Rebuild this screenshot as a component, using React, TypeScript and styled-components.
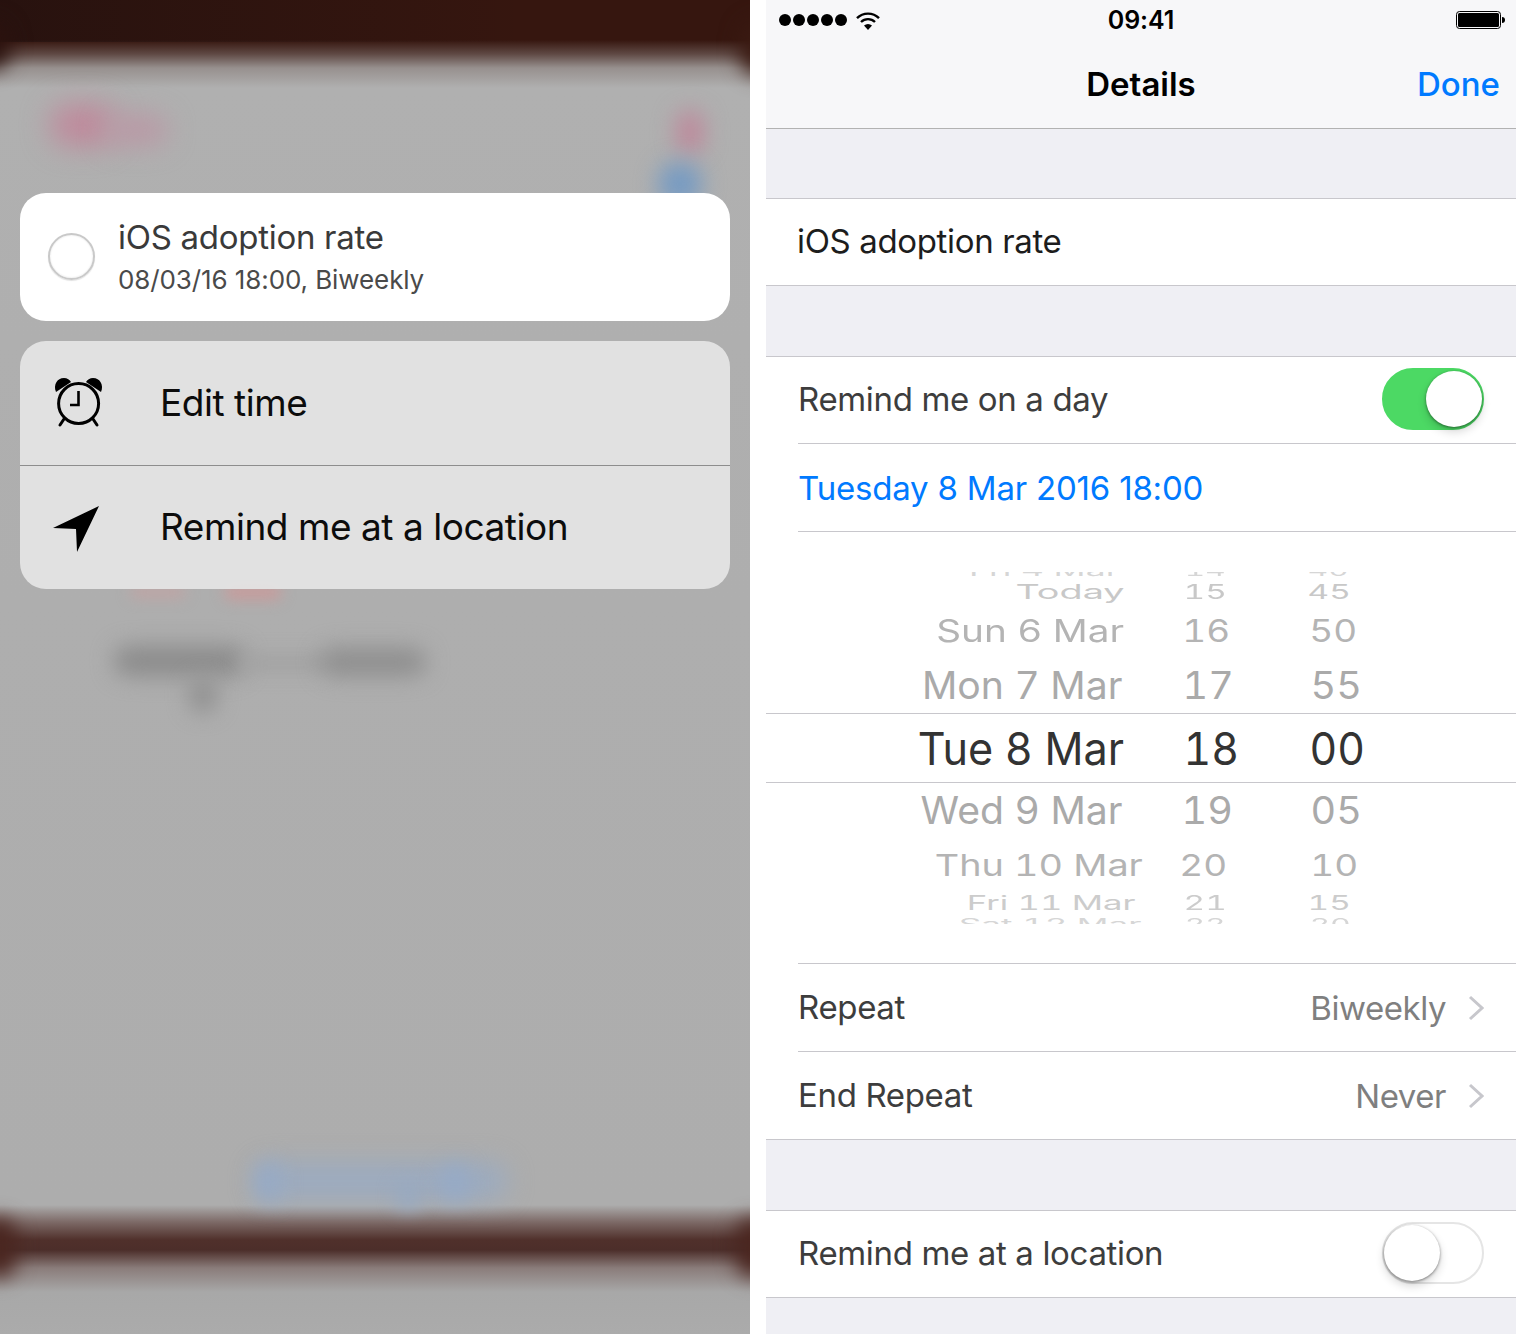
import React from "react";
import styled, { createGlobalStyle } from "styled-components";

const GlobalStyle = createGlobalStyle`
  html, body {
    margin: 0;
    background: #fff;
    font-family: Inter, "Liberation Sans", sans-serif;
  }
`;

const Page = styled.div`
  display: flex;
  justify-content: space-between;
  width: 1516px;
  height: 1334px;
  overflow: hidden;
`;

/* left: 3D touch menu over a blurred list */
const Backdrop = styled.div`
  position: relative;
  width: 750px;
  height: 1334px;
  overflow: hidden;
  padding: 193px 20px 0;
  box-sizing: border-box;
  background:
    linear-gradient(90deg, rgba(18, 12, 14, 0.4) 0, rgba(18, 12, 14, 0) 70%) 0 0 / 100% 42px no-repeat,
    linear-gradient(
      180deg,
      #36160f 0,
      #36160f 40px,
      #5f4944 54px,
      #97908e 68px,
      #b0b0b0 88px,
      #aeaeae 600px,
      #adadad 1205px,
      #7d6a67 1222px,
      #50302b 1240px,
      #4c2e2a 1250px,
      #8a7c7a 1268px,
      #a8a8a8 1292px,
      #ababab 1334px
    );
`;

const Blob = styled.div<{ $x: number; $y: number; $w: number; $h: number; $c: string; $b: number }>`
  position: absolute;
  left: ${(p) => p.$x}px;
  top: ${(p) => p.$y}px;
  width: ${(p) => p.$w}px;
  height: ${(p) => p.$h}px;
  background: ${(p) => p.$c};
  border-radius: 20px;
  filter: blur(${(p) => p.$b}px);
`;

const TaskCard = styled.div`
  position: relative;
  display: flex;
  align-items: center;
  height: 128px;
  padding-left: 28px;
  border-radius: 26px;
  background: #fff;
`;

const RadioCircle = styled.div`
  flex: none;
  width: 43px;
  height: 43px;
  margin-top: -2px;
  border: 2px solid #c9c9c9;
  border-radius: 50%;
  box-shadow: inset 0 0 2px rgba(0, 0, 0, 0.12), 0 1px 1px rgba(0, 0, 0, 0.12);
`;

const TaskText = styled.div`
  margin-left: 23px;
  padding-bottom: 4px;
`;

const TaskTitle = styled.div`
  font-size: 33px;
  line-height: 44px;
  color: #3a3a3a;
  letter-spacing: -0.28px;
`;

const TaskMeta = styled.div`
  font-size: 26px;
  line-height: 32px;
  margin-top: 5px;
  color: #4a4a4a;
  letter-spacing: -0.1px;
`;

const MenuCard = styled.div`
  position: relative;
  margin-top: 20px;
  height: 248px;
  border-radius: 26px;
  background: rgba(228, 228, 228, 0.95);
  overflow: hidden;
`;

const MenuRow = styled.div`
  display: flex;
  align-items: center;
  height: 124px;
  box-sizing: border-box;
  & + & {
    border-top: 1px solid #8d8d8d;
  }
`;

const MenuIcon = styled.div`
  flex: none;
  display: flex;
  width: 141px;
  padding-left: 34px;
  box-sizing: border-box;
`;

const IconSvg = styled.svg`
  width: 50px;
  height: 50px;
  overflow: visible;
`;

const MenuLabel = styled.div`
  margin-left: -1px;
  padding-bottom: 2px;
  font-size: 37px;
  color: #0c0c0c;
  letter-spacing: -0.45px;
`;

/* right: details screen */
const Screen = styled.div`
  width: 750px;
  height: 1334px;
  background: #efeff4;
  overflow: hidden;
`;

const NavBar = styled.div`
  position: relative;
  height: 128px;
  background: #f7f7f9;
  border-bottom: 1px solid #b2b2b2;
`;

const StatusBar = styled.div`
  display: grid;
  grid-template-columns: 1fr auto 1fr;
  align-items: center;
  height: 40px;
  padding: 0 12px;
`;

const SignalGroup = styled.div`
  display: flex;
  align-items: center;
  gap: 2px;
  margin-left: 1px;
`;

const SignalDot = styled.span`
  width: 12px;
  height: 12px;
  border-radius: 50%;
  background: #000;
`;

const WifiIcon = styled.svg`
  width: 24px;
  height: 19px;
  margin-left: 7px;
`;

const Clock = styled.div`
  font-size: 25px;
  font-weight: 600;
  letter-spacing: -0.1px;
  color: #000;
`;

const Battery = styled.svg`
  justify-self: end;
  width: 49px;
  height: 18px;
  margin-right: -1px;
`;

const NavTitleBar = styled.div`
  display: grid;
  grid-template-columns: 1fr auto 1fr;
  align-items: center;
  height: 88px;
  padding: 0 16px;
`;

const NavTitle = styled.div`
  grid-column: 2;
  font-size: 33px;
  font-weight: 600;
  color: #000;
`;

const DoneButton = styled.div`
  grid-column: 3;
  justify-self: end;
  font-size: 33px;
  font-weight: 500;
  color: #007aff;
`;

const Group = styled.div<{ $gap: number }>`
  margin-top: ${(p) => p.$gap}px;
  background: #fff;
  border-top: 1px solid #c8c7cc;
  border-bottom: 1px solid #c8c7cc;
`;

const Row = styled.div`
  display: flex;
  align-items: center;
  justify-content: space-between;
  height: 87px;
  margin-left: 32px;
  padding-right: 32px;
  border-bottom: 1px solid #c8c7cc;
  font-size: 33px;
  letter-spacing: -0.35px;
  color: #3d3d3d;

  &:first-child {
    height: 86px;
  }
  &:last-child {
    border-bottom: 0;
  }
`;

const TitleRow = styled(Row)`
  margin-left: 31px;
  color: #1d1d1d;
`;

const DateRow = styled(Row)`
  color: #007aff;
  letter-spacing: -0.2px;
`;

const RowLabel = styled.div`
  padding-bottom: 2px;
`;

const DateLabel = styled.div``;

const RowValue = styled.div`
  display: flex;
  align-items: center;
  gap: 22px;
  letter-spacing: -0.45px;
  color: #7f7f7f;
`;

const SwitchTrack = styled.div<{ $on?: boolean }>`
  position: relative;
  width: 102px;
  height: 62px;
  margin-bottom: 2px;
  box-sizing: border-box;
  border-radius: 31px;
  background: ${(p) => (p.$on ? "#4cd964" : "#fff")};
  border: 2px solid ${(p) => (p.$on ? "#4cd964" : "#e5e5e5")};
`;

const SwitchKnob = styled.div<{ $on?: boolean }>`
  position: absolute;
  top: 1px;
  ${(p) => (p.$on ? "right: 0" : "left: 0")};
  width: 56px;
  height: 56px;
  border-radius: 50%;
  background: #fff;
  box-shadow: 0 5px 10px rgba(0, 0, 0, 0.16), 0 1px 3px rgba(0, 0, 0, 0.45);
`;

const PickerSection = styled.div`
  height: 431px;
  margin-bottom: 1px;
  padding-top: 40px;
  box-sizing: border-box;

  &::after {
    content: "";
    display: block;
    height: 39px;
    margin-left: 32px;
    box-sizing: content-box;
    border-bottom: 1px solid #c8c7cc;
  }
`;

const PickerWindow = styled.div`
  position: relative;
  height: 352px;
  overflow: hidden;
`;

const PickerDrum = styled.div`
  margin-top: -8px;
`;

const SelectionBand = styled.div`
  position: absolute;
  left: 0;
  right: 0;
  top: 141px;
  height: 68px;
  border-top: 1px solid #c8c7cc;
  border-bottom: 1px solid #c8c7cc;
`;

const DrumRow = styled.div<{ $h: number }>`
  display: grid;
  grid-template-columns: 228px 122px 128px;
  grid-template-rows: ${(p) => p.$h}px;
  align-items: center;
  padding-left: 150px;
`;

const DrumCell = styled.div`
  display: flex;
  justify-content: center;
  align-items: center;
  height: 100%;
  white-space: nowrap;
`;

const DrumText = styled.span<{ $dx: number; $sx: number; $sy: number; $c: string }>`
  flex: none;
  font-size: 45px;
  line-height: 50px;
  font-variant-numeric: tabular-nums;
  color: ${(p) => p.$c};
  transform: translateX(${(p) => p.$dx}px) scale(${(p) => p.$sx}, ${(p) => p.$sy});
`;

const Wifi = () => (
  <WifiIcon viewBox="0 0 24 19">
    <path d="M1 7.2 A15.5 15.5 0 0 1 23 7.2" fill="none" stroke="#000" strokeWidth="2.4" />
    <path d="M5 11 A10 10 0 0 1 19 11" fill="none" stroke="#000" strokeWidth="2.4" />
    <path d="M8 14.6 A6 6 0 0 1 16 14.6 L12 19 Z" fill="#000" />
  </WifiIcon>
);

const AlarmClock = () => (
  <IconSvg viewBox="0 0 50 50">
    <circle cx="24.6" cy="25.5" r="20" fill="none" stroke="#000" strokeWidth="3" />
    <path d="M24.5 13 V27 H16" fill="none" stroke="#000" strokeWidth="2.6" />
    <path d="M2 14 C-1 7 3 0 10 0 C13 0 16 2 17 4 Z" fill="#000" />
    <path d="M47 14 C50 7 46 0 39 0 C36 0 33 2 32 4 Z" fill="#000" />
    <path d="M10 41 L6 47 M39 41 L43 47" stroke="#000" strokeWidth="3" strokeLinecap="round" />
  </IconSvg>
);

const LocationArrow = () => (
  <IconSvg viewBox="0 0 50 50">
    <path d="M45 3 L-1 25 L22 26 L23 49 Z" fill="#000" />
  </IconSvg>
);

const Chevron = () => (
  <svg width="16" height="26" viewBox="0 0 16 26">
    <path d="M2 2 L14 13 L2 24" fill="none" stroke="#c7c7cc" strokeWidth="3" />
  </svg>
);

type Cell = [string, number];

// sx and nx are the width squeeze for the date text and for the numbers
const drumRows: { h: number; sx: number; nx: number; sy: number; c: string; date: Cell; hour: Cell; min: Cell }[] = [
  { h: 14, sx: 0.79, nx: 0.7, sy: 0.34, c: "#d6d6d6", date: ["Fri 4 Mar", 14], hour: ["14", 0], min: ["40", -2] },
  { h: 28, sx: 0.84, nx: 0.74, sy: 0.44, c: "#c8c8c8", date: ["Today", 40], hour: ["15", 0], min: ["45", -1] },
  { h: 50, sx: 0.86, nx: 0.82, sy: 0.68, c: "#b4b4b4", date: ["Sun 6 Mar", 0], hour: ["16", 1], min: ["50", 3] },
  { h: 60, sx: 0.87, nx: 0.88, sy: 0.84, c: "#aaaaaa", date: ["Mon 7 Mar", -8], hour: ["17", 3], min: ["55", 6] },
  { h: 66, sx: 0.96, nx: 0.95, sy: 1, c: "#333333", date: ["Tue 8 Mar", -9.5], hour: ["18", 6], min: ["00", 7] },
  { h: 58, sx: 0.87, nx: 0.88, sy: 0.84, c: "#aaaaaa", date: ["Wed 9 Mar", -8.5], hour: ["19", 2], min: ["05", 6] },
  { h: 50, sx: 0.84, nx: 0.82, sy: 0.66, c: "#b4b4b4", date: ["Thu 10 Mar", 9], hour: ["20", -2], min: ["10", 4] },
  { h: 26, sx: 0.77, nx: 0.74, sy: 0.44, c: "#cccccc", date: ["Fri 11 Mar", 21.5], hour: ["21", 0], min: ["15", -1] },
  { h: 18, sx: 0.78, nx: 0.7, sy: 0.34, c: "#d6d6d6", date: ["Sat 12 Mar", 20], hour: ["22", 0], min: ["20", 0] },
];

const App = () => {
  return (
    <Page>
      <GlobalStyle />
      <Backdrop>
        <Blob $x={-30} $y={20} $w={40} $h={50} $c="#2b120e" $b={10} />
        <Blob $x={740} $y={20} $w={40} $h={56} $c="#3a1a12" $b={10} />
        <Blob $x={50} $y={104} $w={66} $h={42} $c="#bf8a9c" $b={14} />
        <Blob $x={104} $y={114} $w={64} $h={32} $c="#b99aa6" $b={13} />
        <Blob $x={676} $y={110} $w={28} $h={44} $c="#bd8a9c" $b={11} />
        <Blob $x={658} $y={162} $w={44} $h={44} $c="#779bc2" $b={11} />
        <Blob $x={130} $y={586} $w={56} $h={12} $c="#c0a4a4" $b={7} />
        <Blob $x={224} $y={584} $w={58} $h={16} $c="#c79c9c" $b={7} />
        <Blob $x={114} $y={646} $w={132} $h={30} $c="#8b8b8b" $b={11} />
        <Blob $x={240} $y={654} $w={90} $h={18} $c="#a2a2a2" $b={9} />
        <Blob $x={320} $y={648} $w={106} $h={28} $c="#8e8e8e" $b={11} />
        <Blob $x={188} $y={676} $w={30} $h={38} $c="#949494" $b={10} />
        <Blob $x={254} $y={1162} $w={254} $h={38} $c="#9cabbf" $b={12} />
        <Blob $x={256} $y={1162} $w={24} $h={40} $c="#96aac6" $b={10} />
        <Blob $x={440} $y={1164} $w={30} $h={38} $c="#96aac6" $b={10} />
        <Blob $x={396} $y={1180} $w={24} $h={30} $c="#98a9c0" $b={9} />
        <Blob $x={-20} $y={1218} $w={36} $h={60} $c="#4a2620" $b={10} />
        <Blob $x={736} $y={1218} $w={36} $h={60} $c="#4a2620" $b={10} />
        <TaskCard>
          <RadioCircle />
          <TaskText>
            <TaskTitle>iOS adoption rate</TaskTitle>
            <TaskMeta>08/03/16 18:00, Biweekly</TaskMeta>
          </TaskText>
        </TaskCard>
        <MenuCard>
          <MenuRow>
            <MenuIcon>
              <AlarmClock />
            </MenuIcon>
            <MenuLabel>Edit time</MenuLabel>
          </MenuRow>
          <MenuRow>
            <MenuIcon>
              <LocationArrow />
            </MenuIcon>
            <MenuLabel>Remind me at a location</MenuLabel>
          </MenuRow>
        </MenuCard>
      </Backdrop>

      <Screen>
        <NavBar>
          <StatusBar>
            <SignalGroup>
              <SignalDot />
              <SignalDot />
              <SignalDot />
              <SignalDot />
              <SignalDot />
              <Wifi />
            </SignalGroup>
            <Clock>09:41</Clock>
            <Battery viewBox="0 0 49 18">
              <rect x="0.5" y="0.5" width="44" height="17" rx="3" fill="none" stroke="#000" />
              <rect x="2" y="2" width="41" height="14" rx="1.5" fill="#000" />
              <path d="M46 6 C48 6 49 7 49 9 C49 11 48 12 46 12 Z" fill="#000" />
            </Battery>
          </StatusBar>
          <NavTitleBar>
            <NavTitle>Details</NavTitle>
            <DoneButton>Done</DoneButton>
          </NavTitleBar>
        </NavBar>

        <Group $gap={69}>
          <TitleRow>
            <RowLabel>iOS adoption rate</RowLabel>
          </TitleRow>
        </Group>

        <Group $gap={70}>
          <Row>
            <RowLabel>Remind me on a day</RowLabel>
            <SwitchTrack $on>
              <SwitchKnob $on />
            </SwitchTrack>
          </Row>
          <DateRow>
            <DateLabel>Tuesday 8 Mar 2016 18:00</DateLabel>
          </DateRow>
          <PickerSection>
            <PickerWindow>
              <PickerDrum>
                {drumRows.map((r) => (
                  <DrumRow key={r.date[0]} $h={r.h}>
                    <DrumCell>
                      <DrumText $dx={r.date[1]} $sx={r.sx} $sy={r.sy} $c={r.c}>
                        {r.date[0]}
                      </DrumText>
                    </DrumCell>
                    <DrumCell>
                      <DrumText $dx={r.hour[1]} $sx={r.nx} $sy={r.sy} $c={r.c}>
                        {r.hour[0]}
                      </DrumText>
                    </DrumCell>
                    <DrumCell>
                      <DrumText $dx={r.min[1]} $sx={r.nx} $sy={r.sy} $c={r.c}>
                        {r.min[0]}
                      </DrumText>
                    </DrumCell>
                  </DrumRow>
                ))}
              </PickerDrum>
              <SelectionBand />
            </PickerWindow>
          </PickerSection>
          <Row>
            <RowLabel>Repeat</RowLabel>
            <RowValue>
              Biweekly
              <Chevron />
            </RowValue>
          </Row>
          <Row>
            <RowLabel>End Repeat</RowLabel>
            <RowValue>
              Never
              <Chevron />
            </RowValue>
          </Row>
        </Group>

        <Group $gap={70}>
          <Row>
            <RowLabel>Remind me at a location</RowLabel>
            <SwitchTrack>
              <SwitchKnob />
            </SwitchTrack>
          </Row>
        </Group>
      </Screen>
    </Page>
  );
};

export default App;
